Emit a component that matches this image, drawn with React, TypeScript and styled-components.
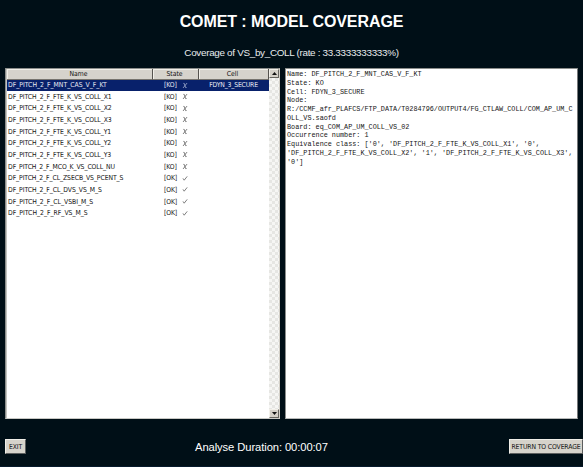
import React from 'react';
import styled, { createGlobalStyle } from 'styled-components';

const GlobalStyle = createGlobalStyle`
  * { box-sizing: border-box; }
  body { margin: 0; background: #000f17; overflow: hidden; }
`;

const ui = `'DejaVu Sans Condensed', 'DejaVu Sans', sans-serif`;
const arial = `'Liberation Sans', Arial, sans-serif`;

const Window = styled.div`
  width: 583px;
  height: 467px;
  display: flex;
  flex-direction: column;
  background: #000f17;
  border-bottom: 1px solid #071a2c;
`;

const Header = styled.header`
  height: 68px;
  flex: none;
  color: #fff;
  font-family: ${arial};
  text-align: center;
  white-space: nowrap;
`;

const Title = styled.h1`
  margin: 12px 0 0;
  font-size: 16px;
  line-height: 20px;
  font-weight: bold;
  letter-spacing: -0.08px;
`;

const Subtitle = styled.p`
  margin: 15px 0 0;
  font-size: 9.9px;
  line-height: 12px;
  letter-spacing: -0.31px;
  color: #e8ecee;
`;

const Panels = styled.main`
  display: flex;
  gap: 5px;
  height: 351px;
  padding: 0 5px;
`;

const TablePanel = styled.section`
  width: 275px;
  display: flex;
  background: #fff;
  border: 1px solid #8c8e8c;
  border-right-color: #d4d0c8;
  border-bottom-color: #c8c8c4;
  box-shadow: inset 1px 0 #c4c4c0;
`;

const Grid = styled.div`
  flex: 1;
  padding-left: 1px;
  font-family: ${ui};
  font-size: 6.8px;
  color: #111;
`;

const columns = `grid-template-columns: 146px 46px 1fr;`;

const HeadRow = styled.div`
  display: grid;
  ${columns}
  height: 10px;
`;

const HeadCell = styled.div`
  padding-right: 2px;
  background: #d6d3cc;
  border-right: 1px solid #55534f;
  border-bottom: 1px solid #77746e;
  box-shadow: inset 1px 1px #f1efe9;
  text-align: center;
  line-height: 10px;
`;

const Row = styled.div<{ $selected?: boolean }>`
  display: grid;
  ${columns}
  height: 11.66px;
  line-height: 12px;
  white-space: nowrap;
  background: ${(p) => (p.$selected ? '#08216b' : 'transparent')};
  color: ${(p) => (p.$selected ? '#e6e9f2' : '#141414')};
`;

const NameCell = styled.span<{ $track: number }>`
  padding-left: 1px;
  letter-spacing: ${(p) => p.$track}px;
`;

const StateCell = styled.span`
  display: flex;
  align-items: center;
  padding-left: 11px;
  letter-spacing: -0.15px;
`;

const StateText = styled.span`
  width: 18px;
`;

const CellCell = styled.span`
  text-align: center;
  padding-right: 1px;
  letter-spacing: -0.16px;
`;

const ScrollTrack = styled.div`
  width: 10px;
  flex: none;
  display: flex;
  flex-direction: column;
  justify-content: space-between;
  background: repeating-conic-gradient(#e6e6e3 0 25%, #f6f6f4 0 50%) 0 0 / 6px 6px;
`;

const ScrollButton = styled.div`
  height: 9px;
  display: flex;
  align-items: center;
  justify-content: center;
  background: #d4d0c8;
  border: 1px solid #f2f0ea;
  border-right-color: #66645f;
  border-bottom-color: #66645f;
`;

const Details = styled.section`
  width: 293px;
  padding: 1px 0 0 1px;
  background: #fff;
  border: 1px solid #8c8e8c;
  border-right-color: #77797a;
  border-bottom-color: #b8bab9;
  color: #161616;
  font-family: 'Liberation Mono', 'Courier New', monospace;
  font-size: 6.81px;
  line-height: 8.75px;
  white-space: pre;
`;

const Footer = styled.footer`
  display: grid;
  grid-template-columns: 190px 1fr 74px;
  align-items: start;
  padding: 20px 0 0 5px;
`;

const Button = styled.button<{ $width: number }>`
  width: ${(p) => p.$width}px;
  height: 15px;
  padding: 0;
  background: #d6d3cb;
  border: 1px solid #f0eee8;
  border-right-color: #5c5e5e;
  border-bottom-color: #5c5e5e;
  color: #111;
  font-family: ${ui};
  font-size: 6.8px;
  line-height: 12px;
  letter-spacing: -0.12px;
  white-space: nowrap;
`;

const Duration = styled.div`
  color: #fff;
  font-family: ${arial};
  font-size: 11.2px;
  line-height: 16px;
  letter-spacing: -0.08px;
`;

const Arrow = ({ down }: { down?: boolean }) => (
  <svg width="5" height="3" viewBox="0 0 5 3">
    <path d={down ? 'M0 0h5L2.5 3z' : 'M0 3h5L2.5 0z'} fill="#111" />
  </svg>
);

const Mark = ({ ok, light }: { ok: boolean; light?: boolean }) => (
  <svg width="6" height="7" viewBox="0 0 6 7" fill="none" stroke={light ? '#aeb8d6' : '#555'} strokeWidth="0.75">
    <path d={ok ? 'M1 3.4L2.2 5.2L5.2 1.4' : 'M1.4 1.4L2.3 1.5L3.6 5.6L4.6 5.5M5.1 1L1 6'} />
  </svg>
);

const rows = [
  { name: 'DF_PITCH_2_F_MNT_CAS_V_F_KT', track: 0, ok: false, cell: 'FDYN_3_SECURE' },
  { name: 'DF_PITCH_2_F_FTE_K_VS_COLL_X1', track: -0.04, ok: false },
  { name: 'DF_PITCH_2_F_FTE_K_VS_COLL_X2', track: -0.04, ok: false },
  { name: 'DF_PITCH_2_F_FTE_K_VS_COLL_X3', track: -0.04, ok: false },
  { name: 'DF_PITCH_2_F_FTE_K_VS_COLL_Y1', track: -0.04, ok: false },
  { name: 'DF_PITCH_2_F_FTE_K_VS_COLL_Y2', track: -0.04, ok: false },
  { name: 'DF_PITCH_2_F_FTE_K_VS_COLL_Y3', track: -0.04, ok: false },
  { name: 'DF_PITCH_2_F_MCO_K_VS_COLL_NU', track: -0.08, ok: false },
  { name: 'DF_PITCH_2_F_CL_ZSECB_VS_PCENT_S', track: -0.08, ok: true },
  { name: 'DF_PITCH_2_F_CL_DVS_VS_M_S', track: -0.06, ok: true },
  { name: 'DF_PITCH_2_F_CL_VSBI_M_S', track: -0.02, ok: true },
  { name: 'DF_PITCH_2_F_RF_VS_M_S', track: 0, ok: true },
];

const details = [
  'Name: DF_PITCH_2_F_MNT_CAS_V_F_KT',
  'State: KO',
  'Cell: FDYN_3_SECURE',
  'Node:',
  'R:/CCMF_afr_PLAFCS/FTP_DATA/T0284796/OUTPUT4/FG_CTLAW_COLL/COM_AP_UM_C',
  'OLL_VS.saofd',
  'Board: eq_COM_AP_UM_COLL_VS_02',
  'Occurrence number: 1',
  "Equivalence class: ['0', 'DF_PITCH_2_F_FTE_K_VS_COLL_X1', '0',",
  "'DF_PITCH_2_F_FTE_K_VS_COLL_X2', '1', 'DF_PITCH_2_F_FTE_K_VS_COLL_X3',",
  "'0']",
].join('\n');

export default function App() {
  return (
    <>
      <GlobalStyle />
      <Window>
        <Header>
          <Title>COMET : MODEL COVERAGE</Title>
          <Subtitle>Coverage of VS_by_COLL (rate : 33.3333333333%)</Subtitle>
        </Header>
        <Panels>
          <TablePanel>
            <Grid>
              <HeadRow>
                <HeadCell>Name</HeadCell>
                <HeadCell>State</HeadCell>
                <HeadCell>Cell</HeadCell>
              </HeadRow>
              {rows.map((r, i) => (
                <Row key={r.name} $selected={i === 0}>
                  <NameCell $track={r.track}>{r.name}</NameCell>
                  <StateCell>
                    <StateText>{r.ok ? '[OK]' : '[KO]'}</StateText>
                    <Mark ok={r.ok} light={i === 0} />
                  </StateCell>
                  <CellCell>{r.cell}</CellCell>
                </Row>
              ))}
            </Grid>
            <ScrollTrack>
              <ScrollButton><Arrow /></ScrollButton>
              <ScrollButton><Arrow down /></ScrollButton>
            </ScrollTrack>
          </TablePanel>
          <Details>{details}</Details>
        </Panels>
        <Footer>
          <Button $width={21}>EXIT</Button>
          <Duration>Analyse Duration: 00:00:07</Duration>
          <Button $width={74}>RETURN TO COVERAGE</Button>
        </Footer>
      </Window>
    </>
  );
}
